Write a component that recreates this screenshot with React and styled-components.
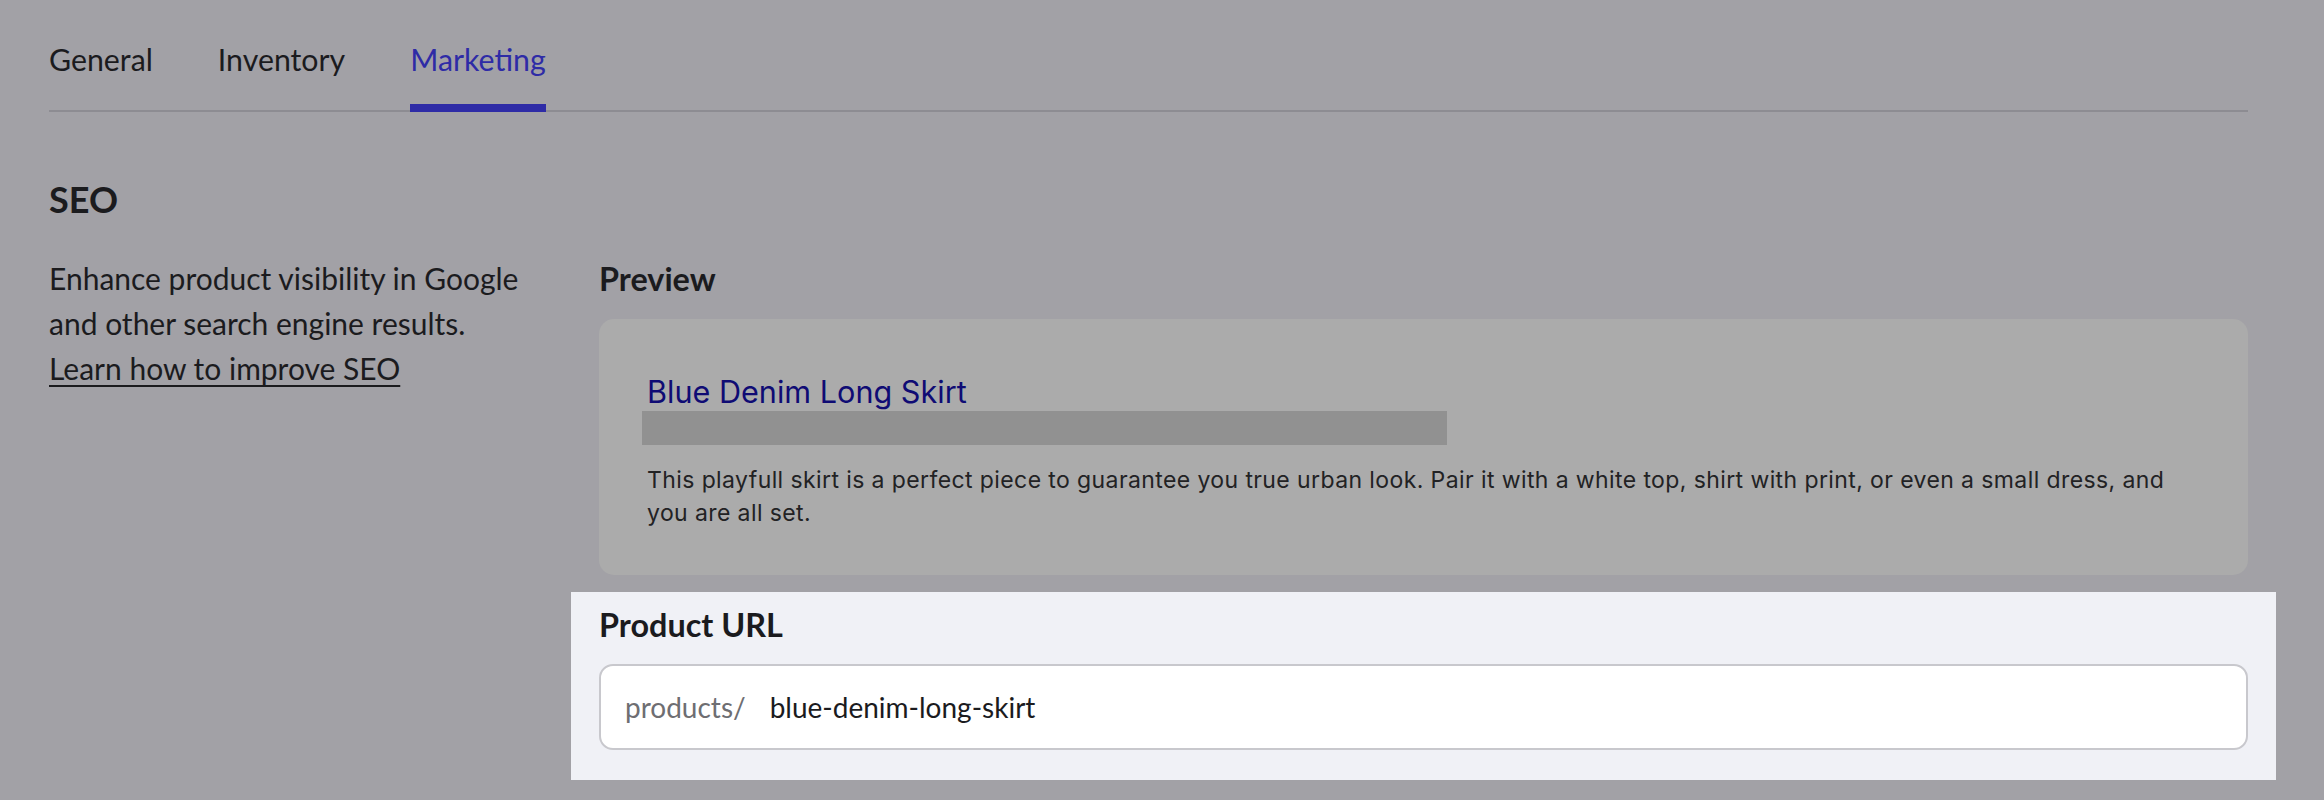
import React from "react";
import styled, { createGlobalStyle } from "styled-components";

const GlobalStyle = createGlobalStyle`
  html, body {
    margin: 0;
    background: #a2a1a6;
  }
  body {
    font-family: Lato, "Noto Sans", sans-serif;
    color: #1b1b1e;
  }
`;

const Page = styled.div`
  padding: 41px 76px 0 49px;
`;

const TabBar = styled.nav`
  display: flex;
  gap: 65px;
  border-bottom: 2px solid #8d8c92;
`;

const Tab = styled.button`
  background: none;
  border: none;
  border-bottom: 8px solid ${(p) => (p.$active ? "#2e2ba6" : "transparent")};
  margin: 0 0 -2px;
  padding: 0 0 27px;
  font-family: Lato, sans-serif;
  font-size: 30.3px;
  line-height: 36px;
  color: ${(p) => (p.$active ? "#2e2ba6" : "#1b1b1e")};
  cursor: pointer;
`;

const SectionTitle = styled.h2`
  margin: 66px 0 0;
  font-size: 36px;
  line-height: 43px;
  font-weight: 700;
`;

const Columns = styled.div`
  display: grid;
  grid-template-columns: 490px 1fr;
  gap: 60px;
  margin-top: 35px;
  align-items: start;
`;

const Intro = styled.p`
  margin: 0;
  font-size: 30px;
  line-height: 45px;
`;

const LearnLink = styled.a`
  display: block;
  width: fit-content;
  color: inherit;
  text-decoration: underline;
  text-decoration-thickness: 2px;
  text-underline-offset: 5px;
`;

const Fields = styled.div`
  display: flex;
  flex-direction: column;
`;

const FieldLabel = styled.div`
  font-size: 32.4px;
  line-height: 45px;
  font-weight: 700;
`;

const PreviewCard = styled.div`
  margin-top: 18px;
  padding: 53px 48px 45px;
  background: #ababab;
  border-radius: 15px;
  font-family: Inter, "Liberation Sans", sans-serif;
`;

const ResultTitle = styled.div`
  font-size: 30.6px;
  line-height: 39px;
  color: #0f0b74;
`;

const HiddenUrl = styled.div`
  width: 805px;
  height: 34px;
  margin-left: -5px;
  background: #919191;
`;

const ResultText = styled.p`
  margin: 19px 0 0;
  font-size: 23px;
  line-height: 33px;
  letter-spacing: 0.4px;
  color: #222224;
`;

const Spotlight = styled.div`
  margin: 17px -28px 0;
  padding: 10px 28px 30px;
  background: #f0f1f6;
`;

const UrlBox = styled.label`
  display: flex;
  align-items: center;
  height: 82px;
  margin-top: 17px;
  padding: 0 24px;
  background: #fff;
  border: 2px solid #c8c8cd;
  border-radius: 14px;
  font-size: 28px;
`;

const UrlPrefix = styled.span`
  color: #6e6e72;
  margin-right: 24px;
`;

const UrlInput = styled.input`
  flex: 1;
  border: none;
  outline: none;
  padding: 0;
  background: transparent;
  font-family: Lato, sans-serif;
  font-size: 28px;
  color: #1b1b1e;
`;

const tabs = ["General", "Inventory", "Marketing"];

export default function App() {
  return (
    <>
      <GlobalStyle />
      <Page>
        <TabBar>
          {tabs.map((t) => (
            <Tab key={t} $active={t === "Marketing"}>
              {t}
            </Tab>
          ))}
        </TabBar>

        <SectionTitle>SEO</SectionTitle>

        <Columns>
          <Intro>
            Enhance product visibility in Google and other search engine results.
            <LearnLink href="#">Learn how to improve SEO</LearnLink>
          </Intro>

          <Fields>
            <FieldLabel>Preview</FieldLabel>
            <PreviewCard>
              <ResultTitle>Blue Denim Long Skirt</ResultTitle>
              <HiddenUrl />
              <ResultText>
                This playfull skirt is a perfect piece to guarantee you true urban look. Pair it
                with a white top, shirt with print, or even a small dress, and you are all set.
              </ResultText>
            </PreviewCard>

            <Spotlight>
              <FieldLabel>Product URL</FieldLabel>
              <UrlBox>
                <UrlPrefix>products/</UrlPrefix>
                <UrlInput readOnly value="blue-denim-long-skirt" />
              </UrlBox>
            </Spotlight>
          </Fields>
        </Columns>
      </Page>
    </>
  );
}
